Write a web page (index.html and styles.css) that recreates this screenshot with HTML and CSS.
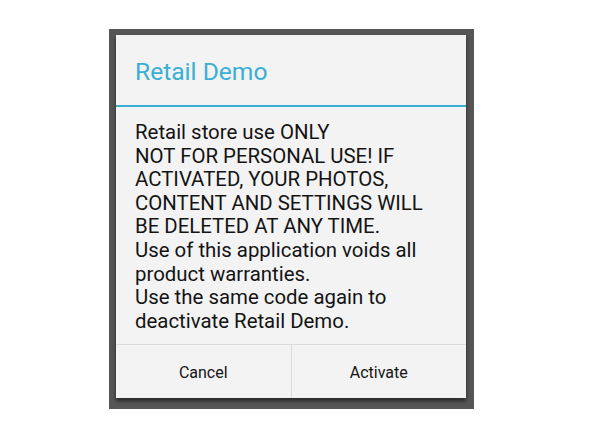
FILE: index.html
```html
<!DOCTYPE html>
<html>
<head>
<meta charset="utf-8">
<link rel="stylesheet" href="styles.css">
</head>
<body>
<div class="frame">
  <div class="dialog">
    <div class="title">Retail Demo</div>
    <div class="message">
      <div class="line">Retail store use ONLY</div>
      <div class="line">NOT FOR PERSONAL USE! IF</div>
      <div class="line">ACTIVATED, YOUR PHOTOS,</div>
      <div class="line">CONTENT AND SETTINGS WILL</div>
      <div class="line">BE DELETED AT ANY TIME.</div>
      <div class="line">Use of this application voids all</div>
      <div class="line">product warranties.</div>
      <div class="line">Use the same code again to</div>
      <div class="line">deactivate Retail Demo.</div>
    </div>
    <div class="buttons">
      <div class="btn">Cancel</div>
      <div class="btn">Activate</div>
    </div>
  </div>
</div>
</body>
</html>
```
FILE: styles.css
```css
html, body {
  margin: 0;
  padding: 0;
  background: #ffffff;
}
body {
  padding-top: 29px;
  font-family: Roboto, "Noto Sans", sans-serif;
}
.frame {
  margin-left: 109px;
  width: 350px;
  height: 363px;
  padding: 6px 8px 11px 7px;
  background: #565656;
}
.dialog {
  width: 350px;
  height: 363px;
  background: #f3f3f3;
  display: flex;
  flex-direction: column;
  box-shadow: 0 3px 4px rgba(0,0,0,0.55);
}
.title {
  height: 72px;
  border-bottom: 2px solid #3aafd6;
  box-sizing: border-box;
  display: flex;
  align-items: center;
  padding-left: 19px;
  padding-top: 2px;
  font-size: 24.6px;
  color: #3aafd6;
}
.message {
  padding: 14px 0 0 19px;
  font-size: 20.4px;
  line-height: 23.6px;
  color: #141414;
  flex: 1;
}
.line {
  white-space: nowrap;
}
.buttons {
  height: 53px;
  border-top: 1px solid #dcdcdc;
  display: flex;
}
.btn {
  flex: 1;
  display: flex;
  align-items: center;
  justify-content: center;
  padding-top: 2px;
  font-size: 16px;
  color: #141414;
}
.btn + .btn {
  border-left: 1px solid #dcdcdc;
}
```
